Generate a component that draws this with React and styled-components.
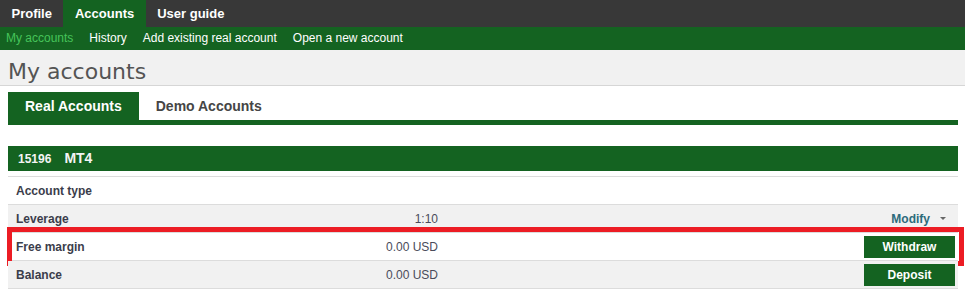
import React from 'react';
import styled, { createGlobalStyle } from 'styled-components';

const GREEN = '#146321';

const GlobalStyle = createGlobalStyle`
    body {
        margin: 0;
        background: #fff;
        font-family: 'Liberation Sans', Arial, sans-serif;
    }
`

const topItems = [
    { label: 'Profile' },
    { label: 'Accounts', active: true },
    { label: 'User guide' },
];

const subItems = [
    { label: 'My accounts', active: true },
    { label: 'History' },
    { label: 'Add existing real account' },
    { label: 'Open a new account' },
];

const rows = [
    { label: 'Account type', value: '' },
    { label: 'Leverage', value: '1:10', action: 'modify' },
    { label: 'Free margin', value: '0.00 USD', action: 'Withdraw', highlight: true },
    { label: 'Balance', value: '0.00 USD', action: 'Deposit' },
];

const App = () => {
    return (
        <>
            <GlobalStyle />
            <TopNav>
                {topItems.map(item => (
                    <TopTab key={item.label} $active={item.active}>{item.label}</TopTab>
                ))}
            </TopNav>
            <SubNav>
                {subItems.map(item => (
                    <SubLink key={item.label} $active={item.active}>{item.label}</SubLink>
                ))}
            </SubNav>
            <TitleBar>My accounts</TitleBar>

            <Content>
                <Tabs>
                    <Tab $active>Real Accounts</Tab>
                    <Tab>Demo Accounts</Tab>
                </Tabs>

                <AccountHeader>
                    <AccountNumber>15196</AccountNumber>
                    <Platform>MT4</Platform>
                </AccountHeader>

                <Rows>
                    {rows.map((row, i) => (
                        <Row key={row.label} $alt={i % 2 === 1}>
                            <Label>{row.label}</Label>
                            <Value>{row.value}</Value>
                            <Action>
                                {row.action === 'modify' && (
                                    <ModifyLink>
                                        Modify <Caret />
                                    </ModifyLink>
                                )}
                                {row.action && row.action !== 'modify' && (
                                    <Button>{row.action}</Button>
                                )}
                            </Action>
                            {row.highlight && <Highlight />}
                        </Row>
                    ))}
                </Rows>
            </Content>
        </>
    );
}

const TopNav = styled.div`
    display: flex;
    height: 27px;
    background-color: #383838;
`

const TopTab = styled.div`
    padding: 0 11.5px;
    line-height: 27px;
    font-size: 13px;
    font-weight: bold;
    color: #fff;
    background-color: ${p => p.$active ? GREEN : 'transparent'};
`

const SubNav = styled.div`
    display: flex;
    gap: 16px;
    height: 23px;
    padding-left: 6px;
    background-color: ${GREEN};
`

const SubLink = styled.div`
    line-height: 23px;
    font-size: 12px;
    color: ${p => p.$active ? '#46c35a' : '#fff'};
`

const TitleBar = styled.h1`
    margin: 0;
    height: 27px;
    padding: 8px 0 0 8px;
    line-height: 27px;
    font-family: 'DejaVu Sans', Verdana, sans-serif;
    font-size: 22px;
    font-weight: normal;
    color: #545454;
    background-color: #f1f1f1;
    border-bottom: 1px solid #d6d6d6;
`

const Content = styled.div`
    padding: 6px 7px 0 8px;
`

const Tabs = styled.div`
    display: flex;
    border-bottom: 5px solid ${GREEN};
`

const Tab = styled.div`
    height: 28px;
    padding: 0 17px;
    line-height: 28px;
    font-size: 14px;
    font-weight: bold;
    color: ${p => p.$active ? '#fff' : '#454545'};
    background-color: ${p => p.$active ? GREEN : 'transparent'};
`

const AccountHeader = styled.div`
    display: flex;
    align-items: baseline;
    gap: 13px;
    height: 25px;
    margin-top: 21px;
    padding-left: 10px;
    line-height: 25px;
    color: #f4f4f4;
    font-weight: bold;
    background-color: ${GREEN};
`

const AccountNumber = styled.span`
    font-size: 12px;
`

const Platform = styled.span`
    font-size: 14px;
`

const Rows = styled.div`
    margin-top: 5px;
    border-top: 1px solid #dcdcdc;
`

const Row = styled.div`
    position: relative;
    display: grid;
    grid-template-columns: 200px 222px 1fr;
    align-items: center;
    height: 27px;
    padding: 0 3px 0 8px;
    font-size: 12px;
    background-color: ${p => p.$alt ? '#f1f1f1' : '#fff'};
    border-bottom: 1px solid #dcdcdc;
`

const Label = styled.div`
    font-weight: bold;
    color: #3b3d4b;
`

const Value = styled.div`
    text-align: right;
    color: #4a4b5a;
`

const Action = styled.div`
    display: flex;
    justify-content: flex-end;
    align-items: center;
`

const ModifyLink = styled.div`
    display: flex;
    align-items: center;
    gap: 10px;
    margin-right: 9px;
    font-weight: bold;
    color: #2c6b7b;
`

const Caret = styled.span`
    width: 0;
    height: 0;
    border-left: 3px solid transparent;
    border-right: 3px solid transparent;
    border-top: 3px solid #666;
`

const Button = styled.div`
    width: 91px;
    height: 22px;
    line-height: 22px;
    text-align: center;
    font-weight: bold;
    color: #fff;
    background-color: ${GREEN};
`

const Highlight = styled.div`
    position: absolute;
    top: -6px;
    bottom: -6px;
    left: -1px;
    right: -6px;
    border: 5px solid #ec1c24;
    pointer-events: none;
`

export default App;
